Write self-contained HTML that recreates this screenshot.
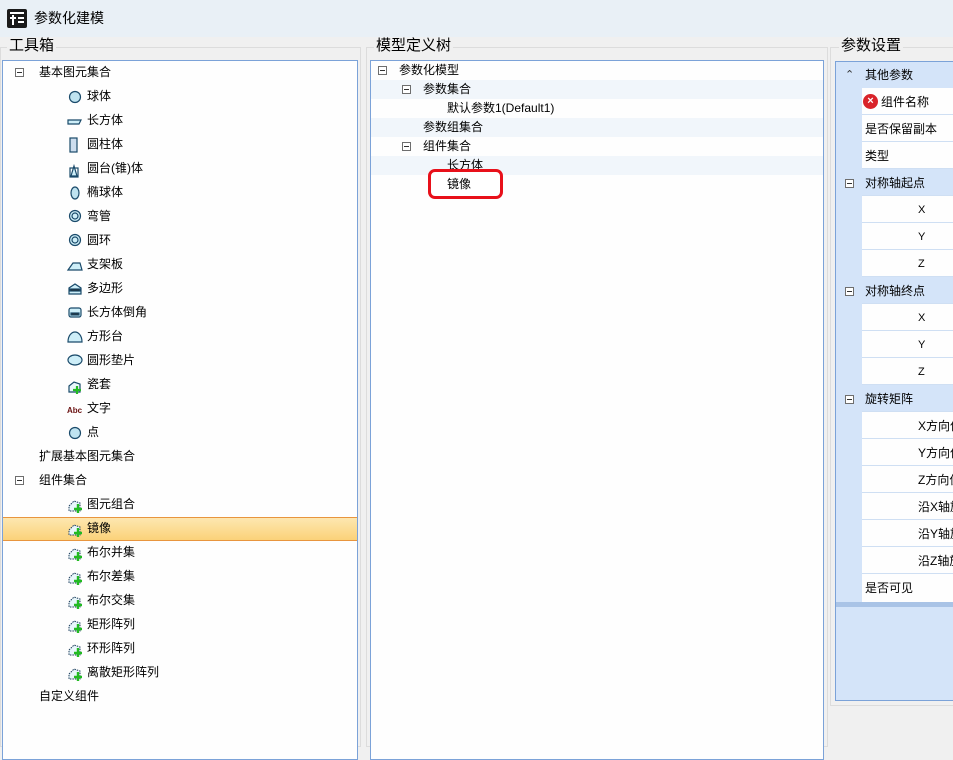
<!DOCTYPE html>
<html><head><meta charset="utf-8">
<style>
*{margin:0;padding:0;box-sizing:border-box}
body{width:953px;height:712px;overflow:hidden;background:#f0f0f0;font-family:"Liberation Sans","Noto Sans CJK SC",sans-serif;font-size:12px;color:#000;position:relative}
.a{position:absolute}
.t{position:absolute;white-space:nowrap;line-height:16px}
.exp{position:absolute;width:9px;height:9px;border:1px solid #6e6e6e;background:#fff}
.exp:after{content:"";position:absolute;left:1px;top:3px;width:5px;height:1px;background:#333}
.row{position:absolute;left:0;right:0;height:27px;border-bottom:1px solid #cfdff3}
</style></head><body>
<div class="a" style="left:0;top:0;width:953px;height:37px;background:#e9f0f6"></div>
<div class="a" style="left:7px;top:9px;width:20px;height:19px;background:#1a1a1a;border-radius:2px">
<div class="a" style="left:3px;top:3px;width:14px;height:2px;background:#fff"></div>
<div class="a" style="left:3px;top:8px;width:6px;height:2px;background:#fff"></div>
<div class="a" style="left:11px;top:8px;width:6px;height:2px;background:#fff"></div>
<div class="a" style="left:5px;top:6px;width:2px;height:10px;background:#fff"></div>
<div class="a" style="left:11px;top:12px;width:6px;height:2px;background:#fff"></div>
</div>
<div class="t" style="left:34px;top:9px;font-size:14px;line-height:18px">参数化建模</div>

<div class="a" style="left:0;top:47px;width:361px;height:700px;border:1px solid #dcdcdc"></div>
<div class="a" style="left:366px;top:47px;width:462px;height:700px;border:1px solid #dcdcdc"></div>
<div class="a" style="left:830px;top:47px;width:140px;height:659px;border:1px solid #dcdcdc"></div>
<div class="t" style="left:7px;top:37px;font-size:15px;line-height:18px;background:#f0f0f0;padding:0 2px">工具箱</div>
<div class="t" style="left:374px;top:37px;font-size:15px;line-height:18px;background:#f0f0f0;padding:0 2px">模型定义树</div>
<div class="t" style="left:839px;top:37px;font-size:15px;line-height:18px;background:#f0f0f0;padding:0 2px">参数设置</div>

<div class="a" style="left:2px;top:60px;width:356px;height:700px;background:#fefefe;border:1px solid #7ba2d8"></div>
<div class="a" style="left:3px;top:517px;width:354px;height:24px;background:linear-gradient(#fde7b0,#fbd279);border-top:1px solid #e8953e;border-bottom:1px solid #e8953e"></div>

<div class="exp" style="left:15px;top:68px"></div>
<div class="t" style="left:39px;top:64px">基本图元集合</div>

<svg class="a" style="left:66px;top:88px" width="18" height="420" viewBox="0 0 18 420" fill="none" stroke="#1a4a6a" stroke-width="1.2">
<circle cx="9" cy="9" r="5.5" fill="#bfe3f0"/>
<path d="M2 32h13l-2 4H2z" fill="#cdeef8"/>
<rect x="4" y="50" width="7" height="14" fill="#cde"/>
<path d="M5 88l3-10 3 10z" fill="#cdeef8"/><rect x="4" y="80" width="8" height="9"/>
<ellipse cx="9" cy="105" rx="4" ry="6" fill="#bfe3f0"/>
<circle cx="9" cy="128" r="5.5" fill="#cdeef8"/><circle cx="9" cy="128" r="3"/>
<circle cx="9" cy="152" r="5.5" fill="#cdeef8"/><circle cx="9" cy="152" r="3"/>
<path d="M2 182l5-7h7l2 7z" fill="#cdeef8"/>
<path d="M3 206v-6l6-4 6 4v6z" fill="#cdeef8"/><rect x="4" y="201" width="10" height="2" fill="#222"/>
<rect x="3" y="220" width="12" height="9" rx="2" fill="#cdeef8"/><rect x="5" y="225" width="8" height="2" fill="#222"/>
<path d="M2 254c0-7 4-10 7-10s7 3 7 10z" fill="#cdeef8"/>
<ellipse cx="9" cy="272" rx="7" ry="5" fill="#cdeef8"/>
<path d="M3 298l5-4 6 2v8H3z" fill="#e8f7fb"/><path d="M11 298v8M7 302h8" stroke="#2b2" stroke-width="2.2"/>
<circle cx="9" cy="345" r="5.5" fill="#bfe3f0"/>
</svg>
<div class="t" style="left:67px;top:403px;font-size:8px;font-weight:bold;color:#6a1010">Abc</div>
<div class="t" style="left:87px;top:88px">球体</div>
<div class="t" style="left:87px;top:112px">长方体</div>
<div class="t" style="left:87px;top:136px">圆柱体</div>
<div class="t" style="left:87px;top:160px">圆台(锥)体</div>
<div class="t" style="left:87px;top:184px">椭球体</div>
<div class="t" style="left:87px;top:208px">弯管</div>
<div class="t" style="left:87px;top:232px">圆环</div>
<div class="t" style="left:87px;top:256px">支架板</div>
<div class="t" style="left:87px;top:280px">多边形</div>
<div class="t" style="left:87px;top:304px">长方体倒角</div>
<div class="t" style="left:87px;top:328px">方形台</div>
<div class="t" style="left:87px;top:352px">圆形垫片</div>
<div class="t" style="left:87px;top:376px">瓷套</div>
<div class="t" style="left:87px;top:400px">文字</div>
<div class="t" style="left:87px;top:424px">点</div>
<div class="t" style="left:39px;top:448px">扩展基本图元集合</div>
<div class="exp" style="left:15px;top:476px"></div>
<div class="t" style="left:39px;top:472px">组件集合</div>
<svg class="a" style="left:66px;top:496px" width="18" height="190" viewBox="0 0 18 190" fill="none">
<g id="ic"><path d="M3 10l5-5 6 2v8H3z" fill="#e8f7fb" stroke="#1a3a5a" stroke-dasharray="1.5 1"/><path d="M12 8v9M8 13h8" stroke="#2b2" stroke-width="2.4"/></g>
<use href="#ic" y="24"/><use href="#ic" y="48"/><use href="#ic" y="72"/><use href="#ic" y="96"/><use href="#ic" y="120"/><use href="#ic" y="144"/><use href="#ic" y="168"/>
</svg>
<div class="t" style="left:87px;top:496px">图元组合</div>
<div class="t" style="left:87px;top:520px">镜像</div>
<div class="t" style="left:87px;top:544px">布尔并集</div>
<div class="t" style="left:87px;top:568px">布尔差集</div>
<div class="t" style="left:87px;top:592px">布尔交集</div>
<div class="t" style="left:87px;top:616px">矩形阵列</div>
<div class="t" style="left:87px;top:640px">环形阵列</div>
<div class="t" style="left:87px;top:664px">离散矩形阵列</div>
<div class="t" style="left:39px;top:688px">自定义组件</div>

<div class="a" style="left:370px;top:60px;width:454px;height:700px;background:#fefefe;border:1px solid #7ba2d8"></div>
<div class="a" style="left:371px;top:80px;width:452px;height:19px;background:#f1f6fb"></div>
<div class="a" style="left:371px;top:118px;width:452px;height:19px;background:#f1f6fb"></div>
<div class="a" style="left:371px;top:156px;width:452px;height:19px;background:#f1f6fb"></div>
<div class="exp" style="left:378px;top:66px"></div>
<div class="t" style="left:399px;top:62px">参数化模型</div>
<div class="exp" style="left:402px;top:85px"></div>
<div class="t" style="left:423px;top:81px">参数集合</div>
<div class="t" style="left:447px;top:100px">默认参数1(Default1)</div>
<div class="t" style="left:423px;top:119px">参数组集合</div>
<div class="exp" style="left:402px;top:142px"></div>
<div class="t" style="left:423px;top:138px">组件集合</div>
<div class="t" style="left:447px;top:157px">长方体</div>
<div class="a" style="left:428px;top:169px;width:75px;height:30px;border:3px solid #e8101a;border-radius:7px;background:#fff"></div>
<div class="t" style="left:447px;top:176px">镜像</div>

<div class="a" style="left:835px;top:61px;width:130px;height:640px;background:#d4e4f9;border:1px solid #7ba2d8"></div>
<div class="a" style="left:836px;top:602px;width:130px;height:5px;background:#a9c3e6"></div>
<div class="t" style="left:845px;top:67px;font-size:11px;color:#333">&#8963;</div>
<div class="t" style="left:865px;top:67px">其他参数</div>
<div class="a" style="left:862px;top:88px;width:100px;height:514px;background:#fefefe">
<div class="row" style="top:0"></div><div class="row" style="top:27px"></div><div class="row" style="top:54px"></div>
<div class="row" style="top:81px;background:#d4e4f9"></div><div class="row" style="top:108px"></div><div class="row" style="top:135px"></div><div class="row" style="top:162px"></div>
<div class="row" style="top:189px;background:#d4e4f9"></div><div class="row" style="top:216px"></div><div class="row" style="top:243px"></div><div class="row" style="top:270px"></div>
<div class="row" style="top:297px;background:#d4e4f9"></div><div class="row" style="top:324px"></div><div class="row" style="top:351px"></div><div class="row" style="top:378px"></div><div class="row" style="top:405px"></div><div class="row" style="top:432px"></div><div class="row" style="top:459px"></div><div class="row" style="top:486px;border:none"></div>
</div>
<div class="a" style="left:863px;top:94px;width:15px;height:15px;border-radius:50%;background:#d9232a;color:#fff;font-size:11px;font-weight:bold;text-align:center;line-height:15px">×</div>
<div class="t" style="left:881px;top:94px">组件名称</div>
<div class="t" style="left:865px;top:121px">是否保留副本</div>
<div class="t" style="left:865px;top:148px">类型</div>
<div class="exp" style="left:845px;top:179px"></div>
<div class="t" style="left:865px;top:175px">对称轴起点</div>
<div class="t" style="left:918px;top:202px;font-size:11px">X</div>
<div class="t" style="left:918px;top:229px;font-size:11px">Y</div>
<div class="t" style="left:918px;top:256px;font-size:11px">Z</div>
<div class="exp" style="left:845px;top:287px"></div>
<div class="t" style="left:865px;top:283px">对称轴终点</div>
<div class="t" style="left:918px;top:310px;font-size:11px">X</div>
<div class="t" style="left:918px;top:337px;font-size:11px">Y</div>
<div class="t" style="left:918px;top:364px;font-size:11px">Z</div>
<div class="exp" style="left:845px;top:395px"></div>
<div class="t" style="left:865px;top:391px">旋转矩阵</div>
<div class="t" style="left:918px;top:418px">X方向偏移</div>
<div class="t" style="left:918px;top:445px">Y方向偏移</div>
<div class="t" style="left:918px;top:472px">Z方向偏移</div>
<div class="t" style="left:918px;top:499px">沿X轴旋转</div>
<div class="t" style="left:918px;top:526px">沿Y轴旋转</div>
<div class="t" style="left:918px;top:553px">沿Z轴旋转</div>
<div class="t" style="left:865px;top:580px">是否可见</div>
</body></html>
